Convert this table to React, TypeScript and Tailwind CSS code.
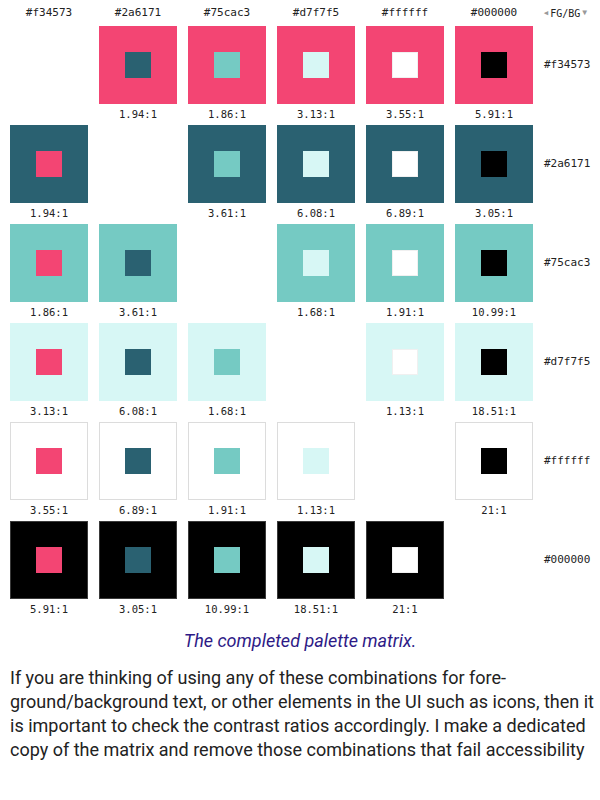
const colors = ['#f34573', '#2a6171', '#75cac3', '#d7f7f5', '#ffffff', '#000000'];

const ratios: (string | null)[][] = [
  [null, '1.94:1', '1.86:1', '3.13:1', '3.55:1', '5.91:1'],
  ['1.94:1', null, '3.61:1', '6.08:1', '6.89:1', '3.05:1'],
  ['1.86:1', '3.61:1', null, '1.68:1', '1.91:1', '10.99:1'],
  ['3.13:1', '6.08:1', '1.68:1', null, '1.13:1', '18.51:1'],
  ['3.55:1', '6.89:1', '1.91:1', '1.13:1', null, '21:1'],
  ['5.91:1', '3.05:1', '10.99:1', '18.51:1', '21:1', null],
];

const mono = "font-['DejaVu_Sans_Mono',monospace]";

function Swatch({ bg, fg, ratio }: { bg: string; fg: string; ratio: string | null }) {
  if (!ratio) return <div className="h-[99px]" />;
  const outerBorder = bg === '#ffffff' ? '#dcdcdc' : bg === '#000000' ? '#3a3a3a' : bg;
  const innerBorder = fg === '#ffffff' ? '#f0f0f0' : fg;
  return (
    <div className="flex flex-col">
      <div
        className="w-[78px] h-[78px] flex items-center justify-center border"
        style={{ backgroundColor: bg, borderColor: outerBorder }}
      >
        <div className="w-[26px] h-[26px] border" style={{ backgroundColor: fg, borderColor: innerBorder }} />
      </div>
      <div className={`h-[21px] flex items-center justify-center text-[10.5px] text-[#222] ${mono}`}>{ratio}</div>
    </div>
  );
}

export default function App() {
  return (
    <div className="w-[600px] h-[800px] bg-white overflow-hidden">
      <div className="pl-[10px] grid grid-cols-[repeat(6,78px)_auto] gap-x-[11px]">
        {colors.map((c) => (
          <div key={c} className={`h-[26px] flex items-center justify-center text-[11px] text-[#222] ${mono}`}>
            {c}
          </div>
        ))}
        <div className={`h-[26px] flex items-center text-[10px] text-[#222] ${mono}`}>
          <span className="text-[#999] text-[7px] mr-[2px]">◀</span>
          <span>FG/BG</span>
          <span className="text-[#999] text-[8px] ml-[2px]">▼</span>
        </div>

        {colors.map((bg, i) => (
          <>
            {colors.map((fg, j) => (
              <Swatch key={`${i}-${j}`} bg={bg} fg={fg} ratio={ratios[i][j]} />
            ))}
            <div key={`label-${i}`} className={`h-[78px] flex items-center text-[11px] text-[#222] ${mono}`}>
              {bg}
            </div>
          </>
        ))}
      </div>

      <p className="mt-[8px] text-center italic text-[18px] leading-[26px] text-[#2d1a86] font-['Roboto',sans-serif]">
        The completed palette matrix.
      </p>

      <div className="mt-[12px] px-[10px] text-[18px] leading-[24px] text-[#222] font-['Roboto',sans-serif]">
        <div className="whitespace-nowrap">If you are thinking of using any of these combinations for fore-</div>
        <div className="whitespace-nowrap">ground/background text, or other elements in the UI such as icons, then it</div>
        <div className="whitespace-nowrap">is important to check the contrast ratios accordingly. I make a dedicated</div>
        <div className="whitespace-nowrap">copy of the matrix and remove those combinations that fail accessibility</div>
      </div>
    </div>
  );
}
